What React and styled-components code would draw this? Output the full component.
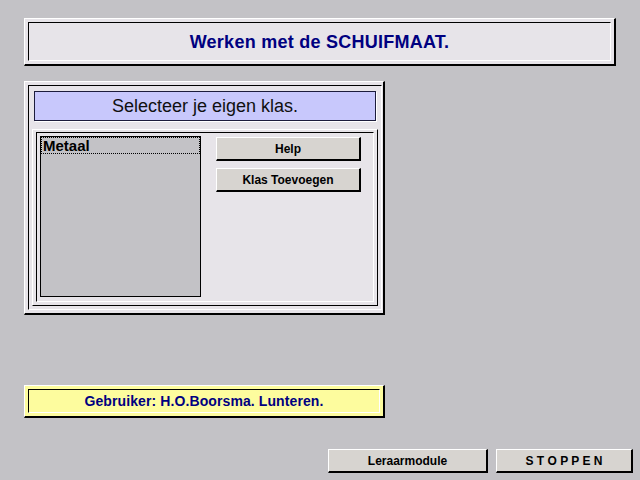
import React from 'react';
import styled, { createGlobalStyle } from 'styled-components';

const GlobalStyle = createGlobalStyle`
  html, body {
    margin: 0;
    padding: 0;
    background: #c3c2c6;
  }
  * {
    box-sizing: border-box;
  }
`;

const Screen = styled.div`
  width: 640px;
  height: 480px;
  display: flex;
  flex-direction: column;
  padding-left: 24px;
  font-family: "Liberation Sans", Arial, sans-serif;
  background: #c3c2c6;
  overflow: hidden;
`;

// raised outer edge: white top/left, black bottom/right
const Frame = styled.div`
  width: ${p => p.$w}px;
  height: ${p => p.$h}px;
  margin-top: ${p => p.$top || 0}px;
  background: ${p => p.$bg || '#e7e4e9'};
  border-top: 1px solid #ffffff;
  border-left: 1px solid #ffffff;
  border-right: 2px solid #000000;
  border-bottom: 2px solid #000000;
  padding: 3px;
  display: flex;
`;

// sunken inner line: black top/left, white bottom/right
const Inset = styled.div`
  flex: 1;
  border-top: 1px solid #000000;
  border-left: 1px solid #000000;
  border-right: 1px solid #ffffff;
  border-bottom: 1px solid #ffffff;
  display: flex;
  flex-direction: column;
  align-items: ${p => (p.$center ? 'center' : 'stretch')};
  justify-content: ${p => (p.$center ? 'center' : 'flex-start')};
  padding: ${p => p.$pad || 0}px;
`;

const Title = styled.div`
  color: #000080;
  font-weight: bold;
  font-size: 18px;
  letter-spacing: 0.25px;
  padding-top: 1px;
`;

const Header = styled.div`
  height: 30px;
  margin: 2px 2px 0 2px;
  background: #c8c8fc;
  border: 1px solid #1c1c3c;
  box-shadow: 1px 1px 0 #ffffff;
  display: flex;
  align-items: center;
  justify-content: center;
  font-size: 18px;
  color: #101010;
`;

const Group = styled.div`
  margin-top: 8px;
  height: 177px;
  width: 346px;
  border-top: 1px solid #ffffff;
  border-left: 1px solid #ffffff;
  border-right: 1px solid #000000;
  border-bottom: 1px solid #000000;
  padding: 2px 3px 3px 3px;
  display: flex;
`;

const GroupBody = styled.div`
  flex: 1;
  border-top: 1px solid #000000;
  border-left: 1px solid #000000;
  border-right: 1px solid #ffffff;
  border-bottom: 1px solid #ffffff;
  padding: 3px;
  display: flex;
  gap: 15px;
  align-items: flex-start;
`;

const ListBox = styled.div`
  width: 161px;
  height: 161px;
  background: #c3c2c6;
  border: 1px solid #000000;
`;

const ListItem = styled.div`
  height: 17px;
  border: 1px dotted #000000;
  font-size: 15px;
  font-weight: bold;
  color: #000000;
  line-height: 15px;
  padding-left: 1px;
`;

const ButtonColumn = styled.div`
  display: flex;
  flex-direction: column;
  gap: 7px;
  padding-top: 1px;
`;

const Button = styled.div`
  width: ${p => p.$w}px;
  height: 24px;
  background: #d7d4d0;
  border-top: 1px solid #ffffff;
  border-left: 1px solid #ffffff;
  border-right: 2px solid #000000;
  border-bottom: 2px solid #000000;
  display: flex;
  align-items: center;
  justify-content: center;
  font-size: 12px;
  font-weight: bold;
  color: #000000;
`;

const Status = styled.div`
  color: #000080;
  font-weight: bold;
  font-size: 14px;
  letter-spacing: 0.1px;
`;

const Footer = styled.div`
  margin-top: auto;
  margin-bottom: 7px;
  margin-right: 7px;
  align-self: flex-end;
  display: flex;
  gap: 8px;
`;

export default function App() {
  return (
    <Screen>
      <GlobalStyle />
      <Frame $w={592} $h={48} $top={18}>
        <Inset $center>
          <Title>Werken met de SCHUIFMAAT.</Title>
        </Inset>
      </Frame>

      <Frame $w={361} $h={234} $top={15}>
        <Inset $pad={3}>
          <Header>Selecteer je eigen klas.</Header>
          <Group>
            <GroupBody>
              <ListBox>
                <ListItem>Metaal</ListItem>
              </ListBox>
              <ButtonColumn>
                <Button $w={145}>Help</Button>
                <Button $w={145}>Klas Toevoegen</Button>
              </ButtonColumn>
            </GroupBody>
          </Group>
        </Inset>
      </Frame>

      <Frame $w={361} $h={33} $top={70} $bg="#fdfc9e">
        <Inset $center>
          <Status>Gebruiker: H.O.Boorsma. Lunteren.</Status>
        </Inset>
      </Frame>

      <Footer>
        <Button $w={160}>Leraarmodule</Button>
        <Button $w={137}>S T O P P E N</Button>
      </Footer>
    </Screen>
  );
}
